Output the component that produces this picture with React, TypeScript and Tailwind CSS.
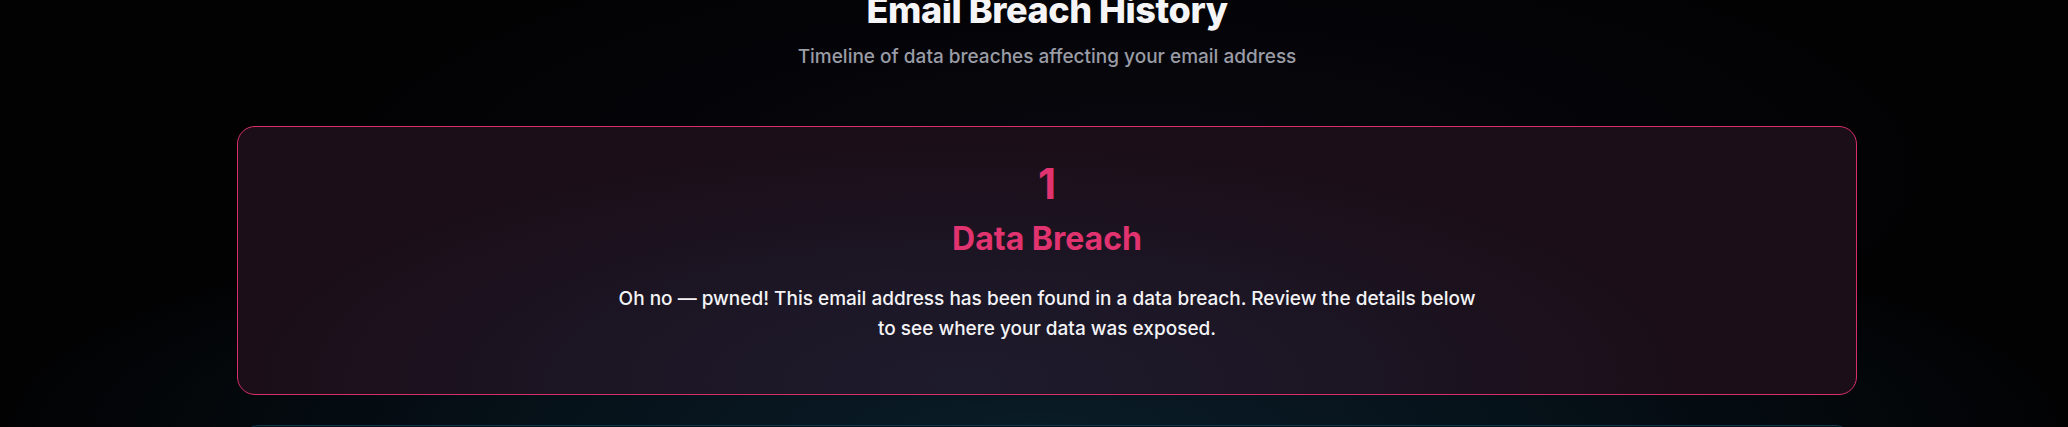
import React from "react";

export default function App() {
  return (
    <div
      className="w-[2068px] h-[427px] overflow-hidden bg-[#020203] relative"
      style={{ fontFamily: "Inter, 'Noto Sans', sans-serif" }}
    >
      <div className="absolute inset-0 bg-[radial-gradient(ellipse_50%_55%_at_50%_100%,#0a1c27_0%,#06121a_45%,transparent_100%)]" />
      <div className="absolute inset-0 bg-[radial-gradient(ellipse_40%_60%_at_55%_40%,rgba(20,20,40,0.35)_0%,transparent_100%)]" />
      <div className="relative flex flex-col items-center pl-[26px] -mt-[10px]">
        <h1 className="text-[36px] leading-[40px] font-extrabold text-[#f5f5f7] tracking-[-0.012em]">
          Email Breach History
        </h1>
        <p className="mt-[13px] text-[19px] leading-[28px] font-medium text-[#9a9ca6]">
          Timeline of data breaches affecting your email address
        </p>
        <div className="mt-[55px] w-[1620px] rounded-[18px] border border-[#d92f68] bg-[#1b0e18] relative overflow-hidden">
          <div className="absolute inset-0 bg-[radial-gradient(ellipse_45%_90%_at_45%_95%,#1e1b2c_0%,#1c1625_45%,transparent_100%)]" />
          <div className="relative flex flex-col items-center pt-9 pb-[51px]">
            <div className="text-[42px] leading-[42px] font-bold text-[#e0336f]">1</div>
            <div className="mt-[16px] text-[32px] leading-[36px] font-bold text-[#e0336f]">
              Data Breach
            </div>
            <p className="mt-[27px] max-w-[872px] text-center text-[19px] leading-[29.5px] font-medium text-[#f3f3f6]">
              Oh no — pwned! This email address has been found in a data breach. Review the details below to see where your data was exposed.
            </p>
          </div>
        </div>
        <div className="mt-[30px] w-[1612px] h-[60px] rounded-[18px] border border-[#0f3449] bg-[#07141c]" />
      </div>
    </div>
  );
}
